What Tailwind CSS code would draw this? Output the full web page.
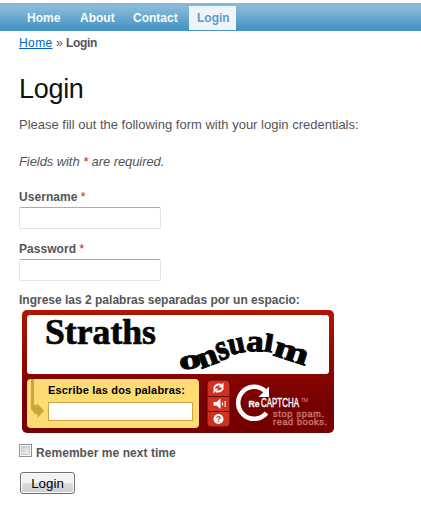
<!DOCTYPE html>
<html lang="en">
<head>
<meta charset="utf-8">
<title>Login</title>
<script src="https://cdn.jsdelivr.net/npm/@tailwindcss/browser@4"></script>
</head>
<body class="bg-white text-[#555] font-['Liberation_Sans',Arial,sans-serif] text-[12px] leading-[16px] overflow-hidden">
<nav class="mt-[3px] h-[28px] bg-linear-to-b from-[#84b8d6] from-20% to-[#4695c4] to-90% flex items-start pt-[3px] pl-[19px] gap-1 font-bold text-[#f6faff] leading-[24px]">
  <a class="px-2 h-6 w-[49px]">Home</a>
  <a class="px-2 h-6 w-[49px]">About</a>
  <a class="px-2 h-6 w-[60px]">Contact</a>
  <a class="px-2 h-6 w-[47px] bg-[#eff4fa] text-[#6399cd]">Login</a>
</nav>
<main class="pl-[19px] flex flex-col items-start whitespace-nowrap">
  <div class="mt-[4px] h-4"><a class="text-[#06c] underline tracking-[0.4px]">Home</a> » <b class="tracking-[-0.3px]">Login</b></div>
  <h1 class="mt-[22px] h-8 leading-8 text-[27px] text-[#111] tracking-[-0.3px]">Login</h1>
  <p class="mt-[12px] h-4 text-[13px]">Please fill out the following form with your login credentials:</p>
  <p class="mt-[21px] h-4 text-[13px] italic tracking-[-0.08px]">Fields with <span class="text-red-600">*</span> are required.</p>
  <label class="mt-[19px] h-4 font-bold tracking-[0.05px]">Username <span class="text-red-600 font-normal">*</span></label>
  <input class="mt-[2px] w-[142px] h-[22px] border border-[#e2e3ea] border-t-[#abadb3] rounded-[2px]">
  <label class="mt-[12px] h-4 font-bold tracking-[0.05px]">Password <span class="text-red-600 font-normal">*</span></label>
  <input class="mt-[2px] w-[142px] h-[22px] border border-[#e2e3ea] border-t-[#abadb3] rounded-[2px]">
  <label class="mt-[11px] h-4 font-bold">Ingrese las 2 palabras separadas por un espacio:</label>
  <section class="mt-[2px] ml-[3px] w-[312px] h-[123px] rounded-[5px] bg-linear-to-b from-[#b01604] to-[#760000] to-75% p-[5px] flex flex-col gap-[5px]">
    <div class="bg-white rounded-[3px] h-[59px] w-[302px]">
      <svg class="overflow-visible" width="302" height="59" viewBox="0 0 302 59" fill="#050505" stroke="#050505" font-family="Liberation Serif, serif" font-weight="bold">
        <text x="18" y="29" font-size="36" stroke-width=".7" textLength="111" lengthAdjust="spacingAndGlyphs">Straths</text>
        <g font-size="28" stroke-width=".9" stroke-linejoin="round">
          <text transform="translate(153 55) rotate(-8) scale(1.6 .98)">o</text>
          <text transform="translate(174 54) rotate(-20) scale(1.3 1.1)">n</text>
          <text transform="translate(193 46) rotate(-22) scale(1.1 1.3)">s</text>
          <text transform="translate(203 40) rotate(-12) scale(1.08 1.15)">u</text>
          <text transform="translate(219 36) rotate(2) scale(1.25 1.1)">a</text>
          <text transform="translate(236 36) rotate(9) scale(1.2 .92)">l</text>
          <text transform="translate(245 40) rotate(18) scale(1.5 1.1)">m</text>
        </g>
      </svg>
    </div>
    <div class="flex items-start">
      <div class="relative w-[172px] h-[49px] bg-[#ffdc73] rounded-[4px] pl-[21px] pt-[4px]">
        <svg class="absolute left-0 top-0" width="20" height="42" viewBox="0 0 20 42"><path d="M4 0h3v26h3v-2l7 8-6.500 7v-4H8l-4-5z" fill="#caa63c"/></svg>
        <div class="h-[15px] leading-[15px] font-bold text-[11px] text-black"><svg class="block overflow-visible" width="140" height="15"><text x="0" y="11" textLength="137">Escribe las dos palabras:</text></svg></div>
        <input class="block mt-[4px] w-[145px] h-[19px] bg-white border border-[#caa63c]">
      </div>
      <svg class="ml-[7px]" width="25" height="49" viewBox="0 0 25 49">
        <rect x="1" y="1" width="23" height="47" rx="4" fill="#cf301f" stroke="#580000"/>
        <path d="M1 17.500h23M1 32.500h23" stroke="#650600"/>
        <g fill="none" stroke="#fff" stroke-width="1.800"><path d="M8 9.500Q9 5.500 13 5.500h2M17 8.500Q16 12.500 12 12.500h-2"/></g>
        <path d="M17.500 3.500v5h-5zM7.500 14.500v-5h5z" fill="#fff"/>
        <path d="M7.500 23h3l4-3.500v10.500l-4-3.500h-3z" fill="#fff"/>
        <path d="M16.500 23.500v3M19.200 22v6" stroke="#fff" stroke-width="1.200"/>
        <circle cx="12.500" cy="40" r="5" fill="#fff"/>
        <text x="12.500" y="43.300" text-anchor="middle" font-size="9" font-weight="bold" fill="#cf301f">?</text>
      </svg>
      <svg class="ml-[4px] overflow-visible" width="94" height="49" viewBox="0 0 94 49" font-family="Liberation Sans, Arial, sans-serif">
        <path d="M31.500 34A16 16 0 1 1 30 12" fill="none" stroke="#fff" stroke-width="4.600"/>
        <path d="M34 7.500v10.500H23.500z" fill="#fff"/>
        <text x="13.500" y="27.500" font-size="9" font-weight="bold" fill="#fff" stroke="#fff" stroke-width=".3" textLength="11" lengthAdjust="spacingAndGlyphs">Re</text>
        <text x="26" y="27.500" font-size="12" fill="#fff" stroke="#fff" stroke-width=".35" textLength="38" lengthAdjust="spacingAndGlyphs">CAPTCHA</text>
        <text x="66" y="22.500" font-size="5" fill="#d99b94" textLength="7">TM</text>
        <g font-size="9" fill="#c9726d" stroke="#c9726d" stroke-width=".45">
          <text x="38" y="38" textLength="51">stop spam.</text>
          <text x="38" y="46" textLength="54">read books.</text>
        </g>
      </svg>
    </div>
  </section>
  <label class="mt-[11px] h-[16px] flex items-start font-bold tracking-[0.05px]">
    <span class="w-[13px] h-[13px] border border-[#8e8f8f] bg-white p-[1px] mr-[4px]"><span class="block w-[9px] h-[9px] border border-[#c5c8cb] bg-linear-to-br from-[#cfd0d2] to-[#f4f4f4]"></span></span>
    <span class="mt-[1px]">Remember me next time</span>
  </label>
  <button class="mt-[12px] ml-px w-[55px] h-[22px] border border-[#707070] rounded-[3px] bg-linear-to-b from-[#f3f3f3] from-50% via-[#dddddd] via-50% to-[#cfcfcf] text-[13.333px] leading-[21px] text-black shadow-[inset_0_0_0_1px_#fafafa]">Login</button>
</main>
</body>
</html>
